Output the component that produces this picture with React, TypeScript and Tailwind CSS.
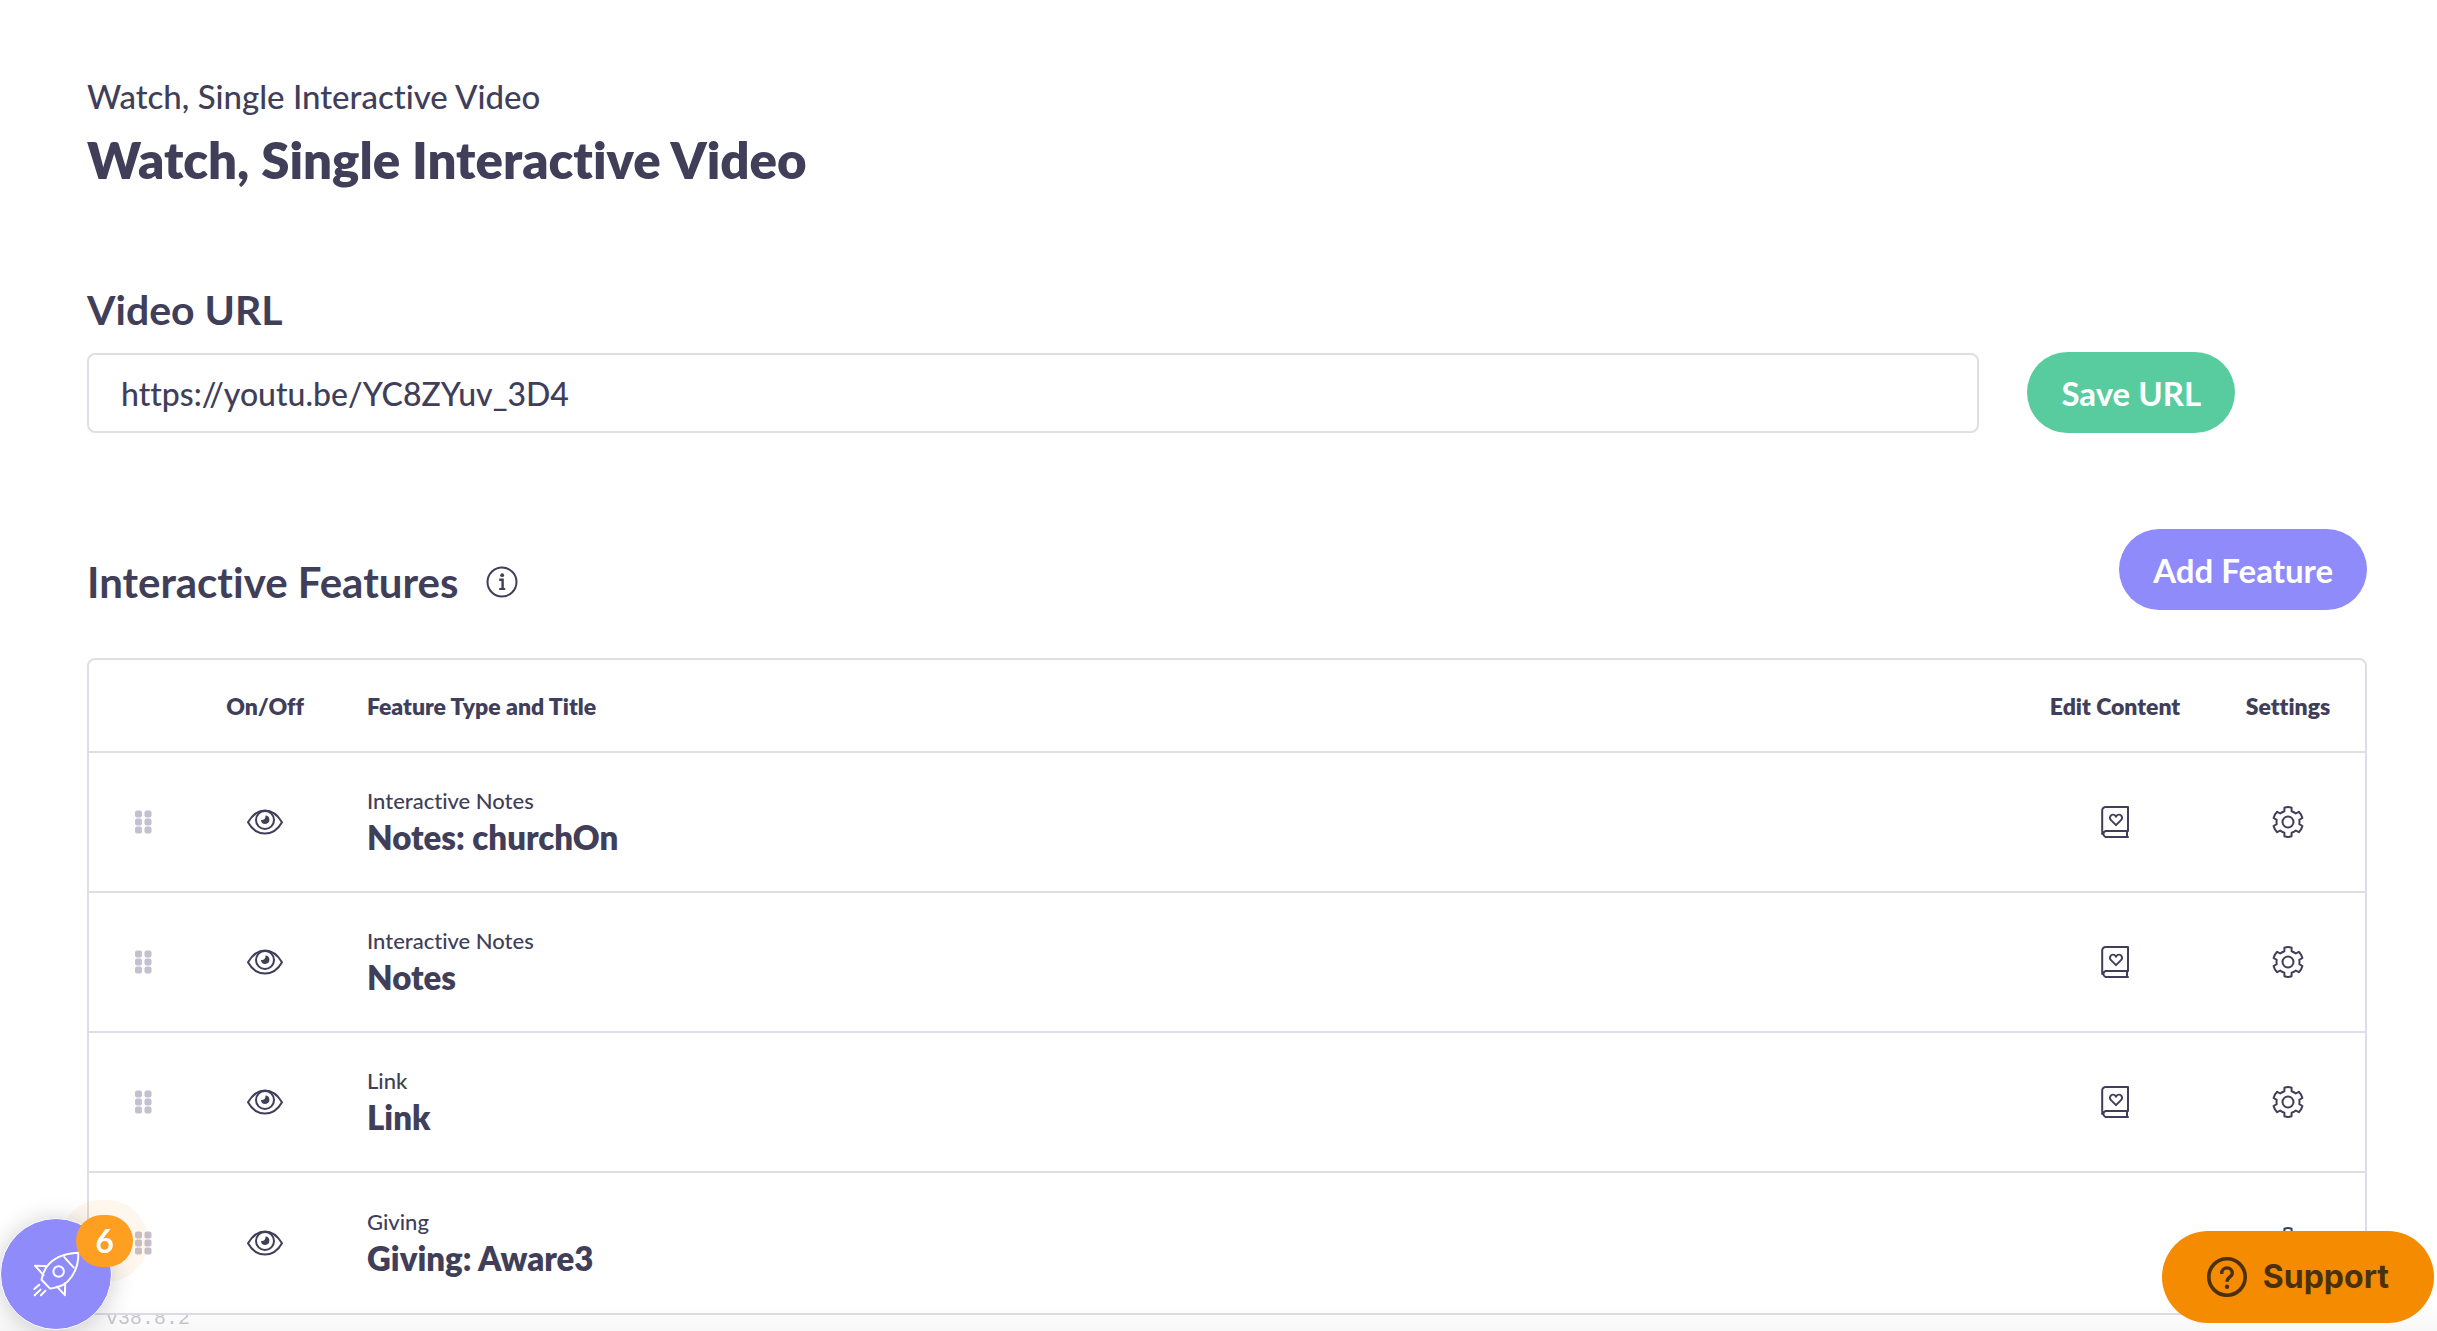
type Feature = { type: string; title: string; editable: boolean };

const features: Feature[] = [
  { type: "Interactive Notes", title: "Notes: churchOn", editable: true },
  { type: "Interactive Notes", title: "Notes", editable: true },
  { type: "Link", title: "Link", editable: true },
  { type: "Giving", title: "Giving: Aware3", editable: false },
];

function InfoIcon() {
  return (
    <svg width="32" height="32" viewBox="0 0 32 32" fill="none" stroke="currentColor" strokeWidth="2" aria-hidden="true">
      <circle cx="16" cy="16" r="14.5" />
      <circle cx="16.2" cy="9.2" r="1.9" fill="currentColor" stroke="none" />
      <path d="M13.2 13.8h3.4v9" strokeWidth="2.4" />
      <path d="M13.200 23h6" />
    </svg>
  );
}

function EyeIcon() {
  return (
    <svg width="36" height="26" viewBox="0 0 36 26" fill="none" stroke="currentColor" strokeWidth="2" aria-hidden="true">
      <path d="M1 13.200C5 6.600 10.700 1.500 18 1.500S31 6.600 35 13.200C31 20.400 25.300 24.500 18 24.500S5 20.400 1 13.200Z" strokeLinejoin="round" />
      <circle cx="18" cy="11" r="9" />
      <path d="M18.400 6.600A4.200 4.200 0 1 1 14 11Q16 11.400 17.500 10T18.400 6.600Z" fill="currentColor" stroke="none" />
    </svg>
  );
}

function BookIcon() {
  return (
    <svg width="28" height="32" viewBox="0 0 28 32" fill="none" stroke="currentColor" strokeWidth="2" strokeLinecap="round" strokeLinejoin="round" aria-hidden="true">
      <path d="M27 25H4.500A3.200 3.200 0 0 0 4.500 31H27M26 25v6M1.200 28V4.500A3.500 3.500 0 0 1 4.700 1H27v24" />
      <path d="M15 19.200l-5-5.100a3.300 3.300 0 0 1-.6-3.900c1.100-2 4.100-2.100 5.300 0l.3.500.3-.5c1.200-2.100 4.200-2 5.300 0a3.300 3.300 0 0 1-.6 3.900Z" strokeWidth="1.900" />
    </svg>
  );
}

function GearIcon() {
  return (
    <svg width="32" height="32" viewBox="0 0 32 32" fill="none" stroke="currentColor" strokeWidth="2" strokeLinejoin="round" aria-hidden="true">
      <circle cx="16" cy="16" r="5.500" />
      <path d="M12.400 1.800Q16 .4 19.600 1.800V5.200Q22 6 23.800 7.500L26.800 5.800Q29.600 8.400 30.400 12L27.300 13.800Q27.700 16 27.300 18.200L30.400 20Q29.600 23.600 26.800 26.200L23.800 24.500Q22 26 19.600 26.800V30.200Q16 31.600 12.400 30.200V26.800Q10 26 8.200 24.500L5.200 26.200Q2.400 23.600 1.600 20L4.700 18.200Q4.300 16 4.700 13.800L1.600 12Q2.400 8.400 5.200 5.800L8.200 7.500Q10 6 12.400 5.200Z" />
    </svg>
  );
}

function DragIcon() {
  return (
    <svg width="18" height="24" viewBox="0 0 18 24" fill="#c3c1cd" aria-hidden="true">
      {[0, 8, 16].map((y) => (
        <g key={y}>
          <rect x="0" y={y + 0.5} width="7" height="7" rx="2" />
          <rect x="9.500" y={y + 0.5} width="7" height="7" rx="2" />
        </g>
      ))}
    </svg>
  );
}

function RocketIcon() {
  return (
    <svg width="47" height="46" viewBox="95 161 143 139" fill="none" stroke="#fff" strokeWidth="6" strokeLinecap="round" strokeLinejoin="round" aria-hidden="true">
      <path d="M233 166C190 168 155 182 135 211C127 224 123 236 121 248L147 275C180 270 197 262 213 238C230 213 234 190 233 166Z" />
      <path d="M190 179L219 211M137 207L101 205L127 234M168 269L192 295L193 258" />
      <circle cx="173" cy="223" r="16" />
      <path d="M99 276L114 263M100 295L118 278M119 295L133 281" />
    </svg>
  );
}

function HelpIcon() {
  return (
    <svg width="40" height="40" viewBox="0 0 40 40" fill="none" stroke="currentColor" aria-hidden="true">
      <circle cx="20" cy="20" r="18.200" strokeWidth="3.600" />
      <path d="M14.700 17V16.200a5.300 5.300 0 0 1 10.600 0c0 3.800-5.300 3.800-5.300 8.600" strokeWidth="3.400" />
      <circle cx="20" cy="29.800" r="2.200" fill="currentColor" stroke="none" />
    </svg>
  );
}

const th = "text-[23px] leading-8 font-extrabold";

export default function App() {
  return (
    <div className="min-h-screen bg-white pt-[76px] pr-[70px] pl-[87px] font-['Lato',sans-serif] text-[#403e59] [font-variant-ligatures:none]">
      <header>
        <p className="text-[33px] leading-10 font-medium">Watch, Single Interactive Video</p>
        <h1 className="mt-4 text-[51px] leading-[56px] font-extrabold">Watch, Single Interactive Video</h1>
      </header>

      <form className="mt-[98px]" onSubmit={(e) => e.preventDefault()}>
        <label htmlFor="video-url" className="block text-[41px] leading-12 font-bold">
          Video URL
        </label>
        <div className="mt-[18px] flex items-center gap-12">
          <input
            id="video-url"
            type="text"
            defaultValue="https://youtu.be/YC8ZYuv_3D4"
            className="h-20 w-[83%] rounded-lg border-2 border-[#dfdee7] px-8 pt-0.5 text-[32px] font-medium outline-none"
          />
          <button type="submit" className="h-[81px] rounded-full bg-[#59cc9f] px-[34px] pt-0.5 text-[33px] font-bold whitespace-nowrap text-white">
            Save URL
          </button>
        </div>
      </form>

      <section className="mt-24">
        <div className="flex items-end justify-between">
          <div className="flex items-center gap-7 pb-1">
            <h2 className="text-[42px] leading-12 font-bold">Interactive Features</h2>
            <button type="button" aria-label="About interactive features">
              <InfoIcon />
            </button>
          </div>
          <button type="button" className="h-[81px] rounded-full bg-[#908bfa] px-[34px] pt-0.5 text-[33px] font-bold whitespace-nowrap text-white">
            Add Feature
          </button>
        </div>

        <div className="relative z-10 mt-12 rounded-lg border-2 border-[#dfdee7] bg-white">
          <table className="w-full table-fixed border-separate border-spacing-0 [&_tr:not(:last-child)>td]:border-b-2 [&_td]:border-[#dfdee7] [&_th]:border-b-2 [&_th]:border-[#dfdee7]">
            <colgroup>
              <col className="w-[110px]" />
              <col className="w-[132px]" />
              <col />
              <col className="w-[192px]" />
              <col className="w-[154px]" />
            </colgroup>
            <thead>
              <tr className="h-[93px]">
                <th aria-label="Order" />
                <th className={th}>On/Off</th>
                <th className="pl-9 text-left text-[23px] leading-8 font-extrabold">Feature Type and Title</th>
                <th className={th}>Edit Content</th>
                <th className={th}>Settings</th>
              </tr>
            </thead>
            <tbody>
              {features.map((f) => (
                <tr key={f.title} className="h-[140px]">
                  <td>
                    <button type="button" aria-label={"Reorder " + f.title} className="mx-auto block cursor-grab">
                      <DragIcon />
                    </button>
                  </td>
                  <td>
                    <button type="button" aria-label={"Toggle " + f.title} className="mx-auto block">
                      <EyeIcon />
                    </button>
                  </td>
                  <td className="pb-0.5 pl-9">
                    <p className="text-[22px] leading-8 font-medium">{f.type}</p>
                    <p className="text-[33px] leading-10 font-extrabold">{f.title}</p>
                  </td>
                  <td>
                    {f.editable && (
                      <button type="button" aria-label={"Edit " + f.title} className="mx-auto block">
                        <BookIcon />
                      </button>
                    )}
                  </td>
                  <td>
                    <button type="button" aria-label={"Settings for " + f.title} className="mx-auto block">
                      <GearIcon />
                    </button>
                  </td>
                </tr>
              ))}
            </tbody>
          </table>
        </div>
      </section>

      <p className="fixed bottom-0 left-[106px] font-['Liberation_Mono',monospace] text-[20px] leading-6 text-[#c9c7d2]">v38.8.2</p>
      <div className="pointer-events-none fixed inset-x-0 bottom-0 z-20 h-7 bg-linear-to-t from-black/3 to-transparent" />

      <div className="fixed bottom-px left-0 z-20">
        <span className="absolute bottom-12 left-[60px] h-[82px] w-[88px] rounded-full bg-[#ff9f22]/8" />
        <button type="button" aria-label="Getting started" className="relative flex size-28 items-center justify-center rounded-full border border-white bg-[#908bfa] shadow-[0_2px_24px_rgba(0,0,0,0.2)]">
          <RocketIcon />
        </button>
        <span className="absolute bottom-[63px] left-19 flex h-[52px] w-[57px] items-center justify-center rounded-[26px] bg-[#ff9f22] text-[32px] leading-none font-bold text-white">
          6
        </span>
      </div>

      <button type="button" className="fixed right-[3px] bottom-2 z-20 flex h-[92px] items-center gap-4 rounded-full bg-[#f58b00] px-[45px] font-['Inter',sans-serif] text-[32px] font-bold text-[#4b300e]">
        <HelpIcon />
        Support
      </button>
    </div>
  );
}
